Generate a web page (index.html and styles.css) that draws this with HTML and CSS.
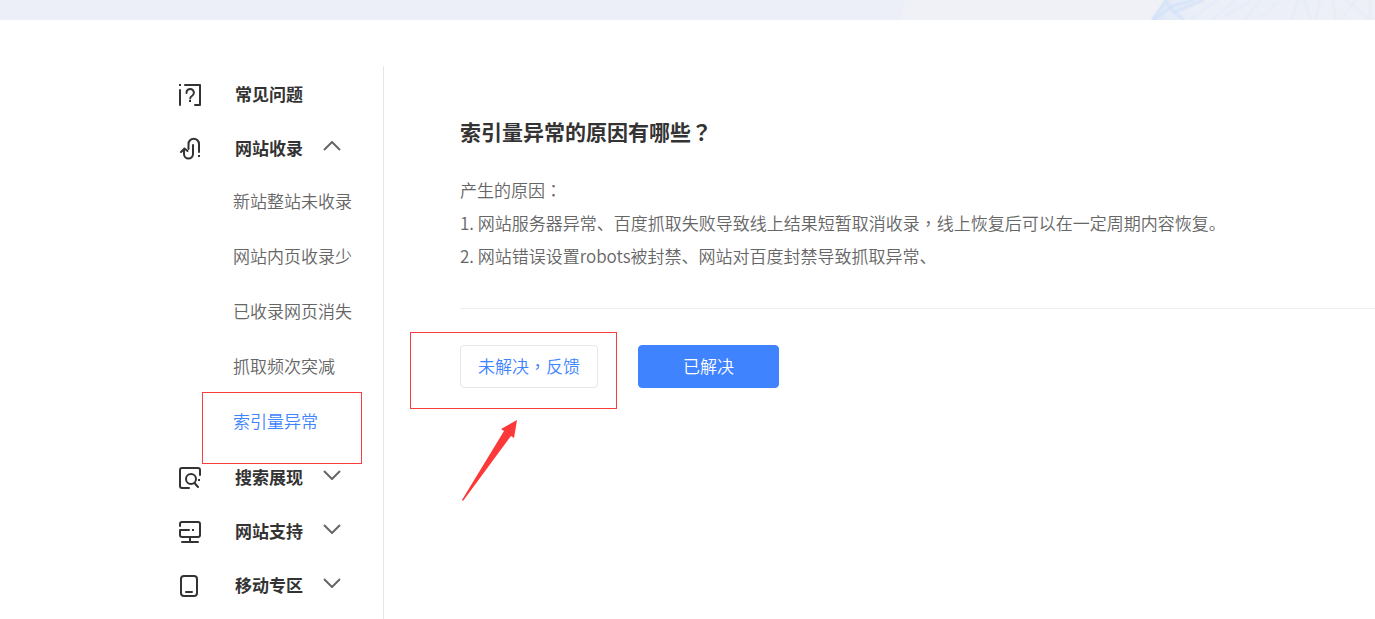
FILE: index.html
```html
<!DOCTYPE html>
<html lang="zh-CN">
<head>
    <meta charset="UTF-8">
    <meta name="viewport" content="width=device-width, initial-scale=1.0">
    <title>索引量异常</title>
    <link rel="stylesheet" href="styles.css">
</head>
<body>
    <header class="banner">
        <svg class="banner-art" width="475" height="20" viewBox="0 0 475 20" aria-hidden="true">
            <defs>
                <linearGradient id="mesh" x1="0" x2="1" y1="0" y2="0">
                    <stop offset="0" stop-color="#dfe8f8"/>
                    <stop offset="0.2" stop-color="#ebeff8"/>
                    <stop offset="1" stop-color="#eef0f7"/>
                </linearGradient>
                <filter id="soft"><feGaussianBlur stdDeviation="0.8"/></filter>
            </defs>
            <path d="M5 0H475V20H1Z" fill="#f0f1f6"/>
            <path d="M264 0H475V20H252Z" fill="url(#mesh)"/>
            <g fill="none" stroke="#cfe0f8" stroke-width="1" filter="url(#soft)">
                <path d="M254 20 272 6 295 0M265 0l9 12 10 8M252 20 267 0M274 12l30-12" stroke-width="2"/>
                <path d="M290 20 318 0M312 20 335 0M325 16l25-14M345 20 360 0M360 18 378 2" opacity="0.6"/>
                <path d="M391 20 398 0M404 0l7 20M415 20 420 0M432 0l4 20M446 0l24 20M440 20 456 0M470 0v20" opacity="0.6"/>
            </g>
        </svg>
    </header>

    <div class="container">
        <nav class="sidebar">
            <ul class="menu">
                <li>
                    <a class="menu-item" href="#">
                        <svg class="icon" width="24" height="24" viewBox="0 0 24 24">
                            <path d="M2 7v15M7 2h15v20h-5"/>
                            <path d="M8.500 10a3.700 3.700 0 1 1 6 2.500C12.900 13.500 12.200 14 12.200 15.500"/>
                            <path class="dot" d="M1 1h2v2H1zM11 17h2v2h-2z"/>
                        </svg>
                        <span>常见问题</span>
                    </a>
                </li>
                <li>
                    <button class="menu-item" type="button" aria-expanded="true">
                        <svg class="icon" width="24" height="24" viewBox="0 0 24 24">
                            <path d="M15 8v9a4.500 4.500 0 0 1-9 0v-4M3 15l3.500-3.500L9.500 14"/>
                            <path d="M10.500 12V7a5 5 0 0 1 10.500 0v8"/>
                            <path class="dot" d="M20 18h2v2h-2z"/>
                        </svg>
                        <span>网站收录</span>
                        <svg class="chevron" width="18" height="10" viewBox="0 0 18 10"><path d="M1 9l8-8 8 8"/></svg>
                    </button>
                    <ul class="submenu">
                        <li><a href="#">新站整站未收录</a></li>
                        <li><a href="#">网站内页收录少</a></li>
                        <li><a href="#">已收录网页消失</a></li>
                        <li><a href="#">抓取频次突减</a></li>
                        <li class="active"><a href="#">索引量异常</a></li>
                    </ul>
                </li>
                <li>
                    <button class="menu-item" type="button" aria-expanded="false">
                        <svg class="icon" width="24" height="24" viewBox="0 0 24 24">
                            <path d="M11 22H4a2 2 0 0 1-2-2V4a2 2 0 0 1 2-2h16a2 2 0 0 1 2 2v5"/>
                            <circle cx="13" cy="13" r="5"/>
                            <path d="M16.500 17l3.500 4"/>
                            <path class="dot" d="M20 13h2v2h-2z"/>
                        </svg>
                        <span>搜索展现</span>
                        <svg class="chevron" width="18" height="10" viewBox="0 0 18 10"><path d="M1 1l8 8 8-8"/></svg>
                    </button>
                </li>
                <li>
                    <button class="menu-item" type="button" aria-expanded="false">
                        <svg class="icon" width="24" height="24" viewBox="0 0 24 24">
                            <path d="M2 6V4a2 2 0 0 1 2-2h16a2 2 0 0 1 2 2v11a2 2 0 0 1-2 2H4a2 2 0 0 1-2-2v-5h9M12 17v4M4 22h16"/>
                            <path class="dot" d="M14 9h2v2h-2z"/>
                        </svg>
                        <span>网站支持</span>
                        <svg class="chevron" width="18" height="10" viewBox="0 0 18 10"><path d="M1 1l8 8 8-8"/></svg>
                    </button>
                </li>
                <li>
                    <button class="menu-item" type="button" aria-expanded="false">
                        <svg class="icon" width="24" height="24" viewBox="0 0 24 24">
                            <rect x="3" y="2" width="16" height="20" rx="3"/>
                            <path d="M8 18h6"/>
                        </svg>
                        <span>移动专区</span>
                        <svg class="chevron" width="18" height="10" viewBox="0 0 18 10"><path d="M1 1l8 8 8-8"/></svg>
                    </button>
                </li>
            </ul>
        </nav>

        <main class="content">
            <h1>索引量异常的原因有哪些<span class="punct" lang="zh-TW">？</span></h1>
            <div class="answer">
                <p>产生的原因<span class="punct" lang="zh-TW">：</span></p>
                <p>1. 网站服务器异常、百度抓取失败导致线上结果短暂取消收录<span class="punct" lang="zh-TW">，</span>线上恢复后可以在一定周期内容恢复。</p>
                <p>2. 网站错误设置robots被封禁、网站对百度封禁导致抓取异常、</p>
            </div>
            <div class="actions">
                <div class="feedback">
                    <button class="btn" type="button">未解决<span class="punct" lang="zh-TW">，</span>反馈</button>
                    <svg class="arrow" width="58" height="84" viewBox="0 0 58 84" aria-hidden="true">
                        <path d="M56 1 53 19 50 17 2 82 1 81 43 12 40 10Z"/>
                    </svg>
                </div>
                <button class="btn btn-primary" type="button">已解决</button>
            </div>
        </main>
    </div>
</body>
</html>
```
FILE: styles.css
```css
*,
*::after {
    box-sizing: border-box;
}

body {
    display: flex;
    flex-direction: column;
    min-height: 100vh;
    margin: 0;
    background-color: #fff;
    color: #666;
    font-family: "Noto Sans CJK SC", sans-serif;
    font-size: 17px;
    font-weight: 350;
}

ul {
    list-style: none;
    margin: 0;
    padding: 0;
}

a {
    color: inherit;
    text-decoration: none;
}

button {
    font: inherit;
    cursor: pointer;
}

/* full-width punctuation centred in its cell */
.punct {
    font-family: "Noto Sans CJK TC", sans-serif;
}

.banner {
    display: flex;
    justify-content: flex-end;
    height: 20px;
    background-color: #eceff8;
    overflow: hidden;
}

.container {
    display: flex;
    flex: 1;
    padding: 46px 0 0 178px;
}

/* sidebar */
.sidebar {
    flex: 0 0 206px;
    border-right: 1px solid #e6e6e6;
}

.menu-item {
    display: flex;
    align-items: center;
    width: 100%;
    height: 54px;
    padding: 0;
    border: none;
    background: none;
    color: #333;
    font-weight: bold;
}

.menu-item span {
    margin-left: 33px;
}

.icon {
    margin-top: 3px;
    fill: none;
    stroke: #333;
    stroke-width: 2;
    stroke-linecap: round;
    stroke-linejoin: round;
}

.icon .dot {
    fill: #333;
    stroke: none;
}

.chevron {
    margin: 0 0 3px 20px;
    fill: none;
    stroke: #666;
    stroke-width: 2;
}

.submenu li {
    position: relative;
    padding: 0 0 2px 55px;
    line-height: 53px;
}

.submenu .active {
    color: #4083ff;
}

/* red marks drawn over the page */
.submenu .active::after,
.feedback::after {
    content: "";
    position: absolute;
    border: 1px solid #fa3c3c;
    pointer-events: none;
}

.submenu .active::after {
    top: -2px;
    left: 24px;
    width: 160px;
    height: 72px;
}

.feedback::after {
    top: -13px;
    left: -50px;
    width: 207px;
    height: 77px;
}

.arrow {
    position: absolute;
    top: 74px;
    left: 1px;
    fill: #fd3838;
}

/* content */
.content {
    flex: 1;
    padding: 48px 0 0 76px;
}

h1 {
    margin: 0;
    color: #333;
    font-size: 21px;
    line-height: 34px;
}

.answer {
    padding: 25px 0 36px;
    border-bottom: 1px solid #eee;
}

.answer p {
    margin: 0;
    line-height: 33px;
}

.actions {
    display: flex;
    gap: 40px;
    padding-top: 36px;
}

.feedback {
    position: relative;
}

.btn {
    height: 43px;
    padding: 0 17px 2px;
    border: 1px solid #e6e6e6;
    border-radius: 4px;
    background-color: #fff;
    color: #4083ff;
}

.btn-primary {
    padding: 0 44px 2px;
    border-color: #4083ff;
    background-color: #4083ff;
    color: #fff;
}
```
